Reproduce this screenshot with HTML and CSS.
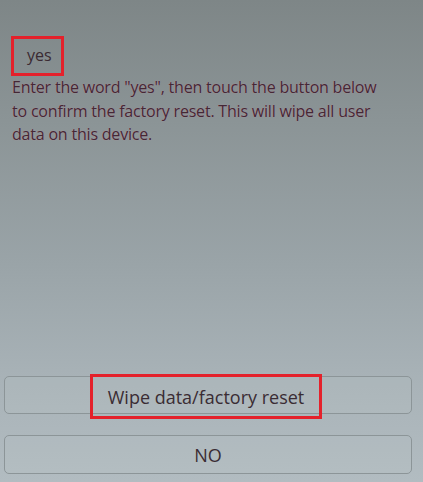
FILE: index.html
```html
<!DOCTYPE html>
<html lang="en">
<head>
<meta charset="utf-8">
<title>Factory reset</title>
<link rel="stylesheet" href="styles.css">
</head>
<body>
<main class="screen">
  <div class="entry"><span class="entry-text">yes</span></div>
  <p class="notice">Enter the word "yes", then touch the button below to confirm the factory reset. This will wipe all user data on this device.</p>
  <div class="actions">
    <button class="action"><span class="action-label marked">Wipe data/factory reset</span></button>
    <button class="action"><span class="action-label">NO</span></button>
  </div>
</main>
</body>
</html>
```
FILE: styles.css
```css
html, body {
  margin: 0;
  padding: 0;
}

body {
  width: 423px;
  height: 482px;
  overflow: hidden;
  font-family: "Open Sans", "Noto Sans", "DejaVu Sans", sans-serif;
  color: #3b2a33;
}

.screen {
  box-sizing: border-box;
  height: 482px;
  display: flex;
  flex-direction: column;
  background: linear-gradient(180deg, #7e8687 0%, #8b9496 25%, #9aa4a8 55%, #a9b3b8 80%, #b2bcc1 100%);
}

.entry {
  box-sizing: border-box;
  width: 53px;
  height: 40px;
  margin: 36px 0 0 11px;
  border: 3px solid #e4212b;
  display: flex;
  align-items: center;
  padding-left: 13px;
}

.entry-text {
  font-size: 16px;
  line-height: 1;
  color: #3a2a32;
  margin-top: -2px;
}

.notice {
  width: 380px;
  margin: 0 0 0 12px;
  font-size: 16px;
  line-height: 23.5px;
  letter-spacing: -0.2px;
  color: #442835;
  text-shadow: 0 0 1px rgba(214, 150, 170, 0.7);
}

.actions {
  margin-top: auto;
  display: flex;
  flex-direction: column;
  gap: 21px;
  padding: 0 11px 8px 4px;
}

.action {
  box-sizing: border-box;
  height: 38px;
  margin: 0;
  padding: 0;
  display: flex;
  align-items: center;
  justify-content: center;
  border: 1.5px solid #8c9598;
  border-radius: 5px;
  background: rgba(190, 198, 202, 0.18);
  font-family: inherit;
  font-size: 18px;
  color: #3a2c33;
  overflow: visible;
}

.action + .action {
  height: 39px;
}

.action-label {
  line-height: 1;
}

.action-label.marked {
  box-sizing: border-box;
  flex: none;
  width: 232px;
  height: 45px;
  margin: 3px 0 0 -4px;
  border: 3px solid #e4212b;
  display: flex;
  align-items: center;
  justify-content: center;
}
```
